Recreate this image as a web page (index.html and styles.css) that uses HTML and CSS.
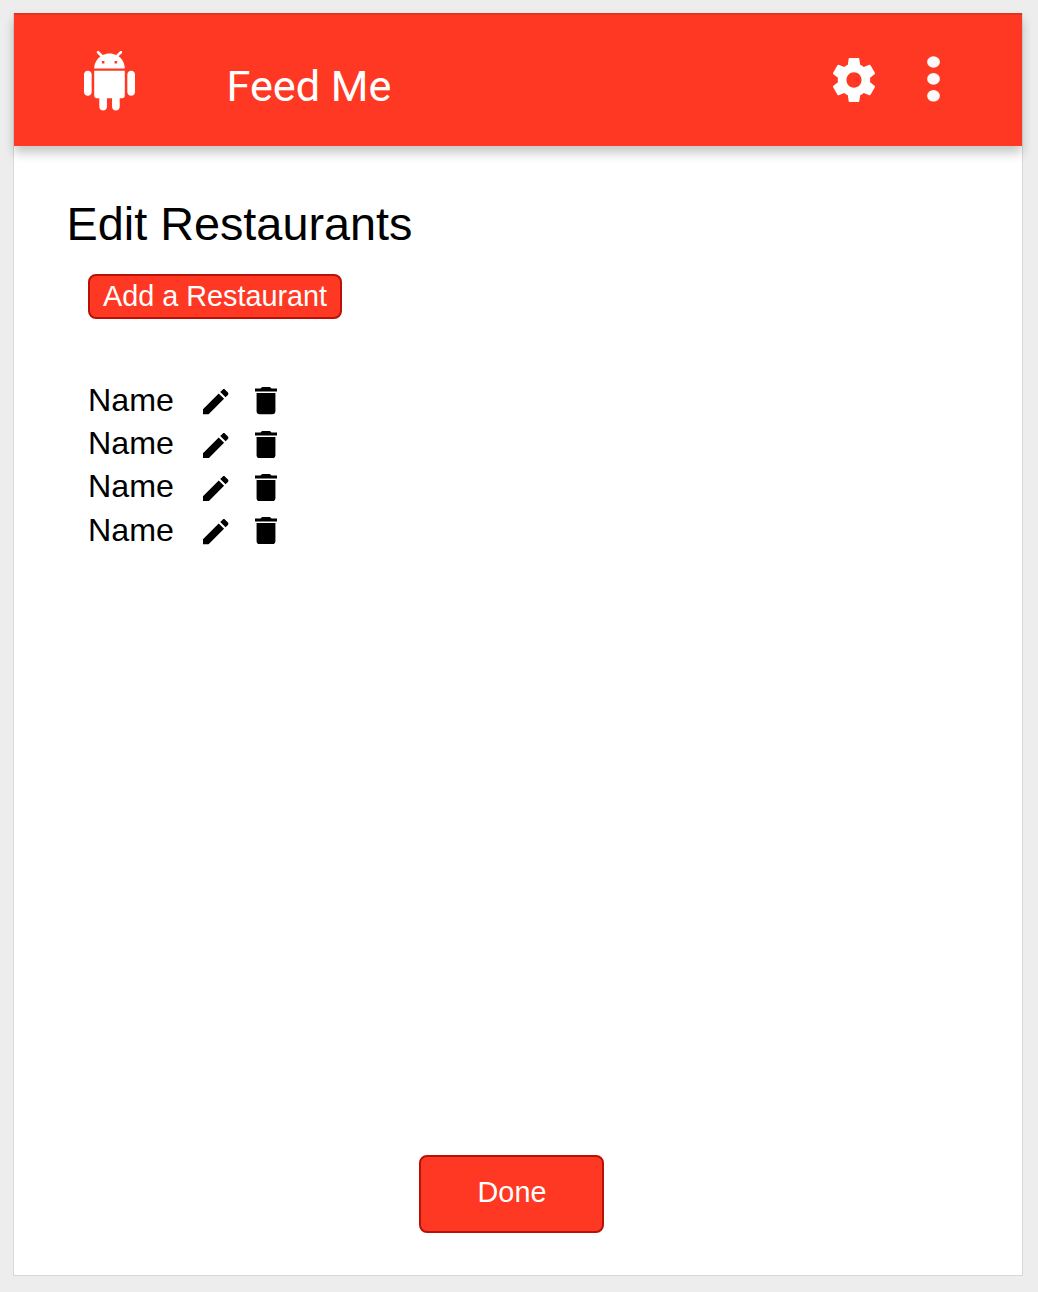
FILE: index.html
```
<!DOCTYPE html>
<html lang="en">
<head>
<meta charset="utf-8">
<title>Feed Me</title>
<link rel="stylesheet" href="styles.css">
</head>
<body>
<svg class="sprite" aria-hidden="true">
  <symbol id="edit" viewBox="3 3 18 18" preserveAspectRatio="none"><path d="M3 17.25V21h3.75L17.81 9.94l-3.75-3.75L3 17.25zM20.71 7.04c.39-.39.39-1.02 0-1.41l-2.34-2.34c-.39-.39-1.02-.39-1.41 0l-1.83 1.83 3.75 3.75 1.83-1.83z"/></symbol>
  <symbol id="delete" viewBox="5 3 14 18" preserveAspectRatio="none"><path d="M6 19c0 1.1.9 2 2 2h8c1.1 0 2-.9 2-2V7H6v12zM19 4h-3.5l-1-1h-5l-1 1H5v2h14V4z"/></symbol>
</svg>
<div class="screen">
  <header class="bar">
    <svg class="android" viewBox="2 0 20 24" preserveAspectRatio="none"><path d="M6 18c0 .55.45 1 1 1h1v3.5c0 .83.67 1.5 1.5 1.5s1.5-.67 1.5-1.5V19h2v3.5c0 .83.67 1.5 1.5 1.5s1.5-.67 1.5-1.5V19h1c.55 0 1-.45 1-1V8H6v10zM3.5 8C2.67 8 2 8.67 2 9.5v7c0 .83.67 1.5 1.5 1.5S5 17.33 5 16.5v-7C5 8.67 4.33 8 3.5 8zm17 0c-.83 0-1.5.67-1.5 1.5v7c0 .83.67 1.5 1.5 1.5s1.5-.67 1.5-1.5v-7c0-.83-.67-1.5-1.5-1.5zm-4.97-5.84l1.3-1.3c.2-.2.2-.51 0-.71-.2-.2-.51-.2-.71 0l-1.48 1.48C13.85 1.23 12.95 1 12 1c-.96 0-1.86.23-2.66.63L7.85.15c-.2-.2-.51-.2-.71 0-.2.2-.2.51 0 .71l1.31 1.31C6.97 3.26 6 5.01 6 7h12c0-1.99-.97-3.75-2.47-4.84zM10 5H9V4h1v1zm5 0h-1V4h1v1z"/></svg>
    <div class="app-name">Feed Me</div>
    <svg class="gear" viewBox="2.27 2 19.46 20" preserveAspectRatio="none"><path d="M19.43 12.98c.04-.32.07-.64.07-.98s-.03-.66-.07-.98l2.11-1.65c.19-.15.24-.42.12-.64l-2-3.46c-.12-.22-.39-.3-.61-.22l-2.49 1c-.52-.4-1.08-.73-1.69-.98l-.38-2.65C14.46 2.18 14.25 2 14 2h-4c-.25 0-.46.18-.49.42l-.38 2.65c-.61.25-1.17.59-1.69.98l-2.49-1c-.23-.09-.49 0-.61.22l-2 3.46c-.13.22-.07.49.12.64l2.11 1.65c-.04.32-.07.65-.07.98s.03.66.07.98l-2.11 1.65c-.19.15-.24.42-.12.64l2 3.46c.12.22.39.3.61.22l2.49-1c.52.4 1.08.73 1.69.98l.38 2.65c.03.24.24.42.49.42h4c.25 0 .46-.18.49-.42l.38-2.65c.61-.25 1.17-.59 1.69-.98l2.49 1c.23.09.49 0 .61-.22l2-3.46c.12-.22.07-.49-.12-.64l-2.11-1.65zM12 15.5c-1.93 0-3.5-1.57-3.5-3.5s1.57-3.5 3.5-3.5 3.5 1.57 3.5 3.5-1.57 3.5-3.5 3.5z"/></svg>
    <svg class="more" viewBox="0 0 13 46"><ellipse cx="6.5" cy="6" rx="6.4" ry="5.8"/><ellipse cx="6.5" cy="22.9" rx="6.4" ry="5.8"/><ellipse cx="6.5" cy="39.8" rx="6.4" ry="5.8"/></svg>
  </header>
  <main class="content">
    <h1 class="title">Edit Restaurants</h1>
    <button class="btn add">Add a Restaurant</button>
    <ul class="list">
      <li class="row"><span class="name">Name</span><svg class="edit"><use href="#edit"/></svg><svg class="delete"><use href="#delete"/></svg></li>
      <li class="row"><span class="name">Name</span><svg class="edit"><use href="#edit"/></svg><svg class="delete"><use href="#delete"/></svg></li>
      <li class="row"><span class="name">Name</span><svg class="edit"><use href="#edit"/></svg><svg class="delete"><use href="#delete"/></svg></li>
      <li class="row"><span class="name">Name</span><svg class="edit"><use href="#edit"/></svg><svg class="delete"><use href="#delete"/></svg></li>
    </ul>
    <button class="btn done">Done</button>
  </main>
</div>
</body>
</html>
```
FILE: styles.css
```
* { box-sizing: border-box; }
body {
  margin: 0;
  padding: 13px;
  height: 1292px;
  background: #ededed;
  font-family: "Liberation Sans", Arial, sans-serif;
  color: #000;
  overflow: hidden;
}
.sprite { display: none; }
svg { display: block; flex: none; }
.screen {
  width: 1010px;
  height: 1263px;
  display: flex;
  flex-direction: column;
  background: #fff;
  border: 1.5px solid #d8d8d8;
  border-top: 0;
}
.bar {
  flex: none;
  display: flex;
  align-items: flex-start;
  width: 1008px;
  height: 133px;
  padding-left: 70px;
  background: #ff3823;
  border-top: 2px solid #e33422;
  box-shadow: 0 7px 10px rgba(0, 0, 0, .22);
  fill: #fff;
}
.android { width: 51px; height: 59.6px; margin-top: 36px; }
.app-name {
  width: 605.5px;
  margin: 47px 0 0 91.5px;
  font: 43.2px/50px Roboto, sans-serif;
  color: #fff;
}
.gear { width: 42px; height: 44px; margin-top: 43px; margin-left: 1px; }
.more { width: 13px; height: 46px; margin: 41px 0 0 51.5px; fill: #fafafa; }
.content {
  flex: 1;
  display: flex;
  flex-direction: column;
  align-items: flex-start;
  padding: 51px 0 42px 74px;
}
.title {
  margin: 0 0 0 -21.5px;
  font-size: 46.8px;
  line-height: 54px;
  font-weight: 400;
}
.btn {
  padding: 0;
  background: #ff3823;
  border: 2px solid #b81208;
  border-radius: 8px;
  font: 28.8px/33px "Liberation Sans", Arial, sans-serif;
  color: #fff;
}
.add { width: 254px; height: 45px; margin-top: 23px; padding-bottom: 1px; }
.list {
  margin: 60px 0 0;
  padding: 0;
  list-style: none;
}
.row { display: flex; height: 43.2px; }
.name { width: 115px; font-size: 32.2px; line-height: 43px; }
.edit { width: 25.6px; height: 25.6px; margin-top: 10.4px; }
.delete { width: 22px; height: 27.4px; margin: 8.4px 0 0 26.6px; }
.done { width: 185px; height: 78px; margin: auto 0 0 331px; padding: 0 0 3px 1px; }
```
